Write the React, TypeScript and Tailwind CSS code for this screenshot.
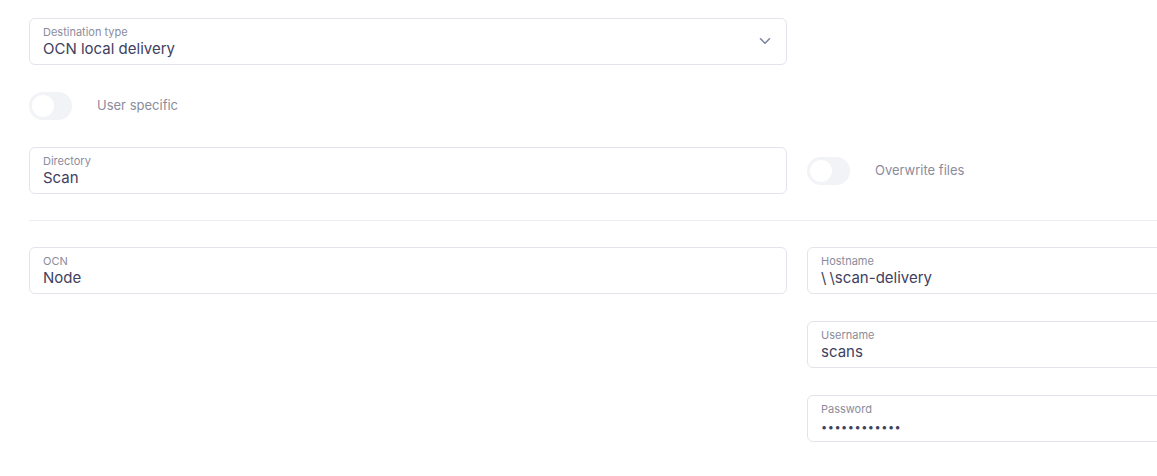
import React from 'react';

const font = { fontFamily: 'Inter, "Noto Sans", sans-serif' };

const Field: React.FC<{ label: string; value: React.ReactNode; chevron?: boolean }> = ({ label, value, chevron }) => (
  <div className="relative h-[47px] rounded-md border border-[#e3e3ee] bg-white pl-[13px] pr-4 pt-[6px]">
    <div className="text-[11px] leading-[14px] text-[#8b8c9c]">{label}</div>
    <div className="text-[15px] leading-[19px] text-[#3e4160]">{value}</div>
    {chevron && (
      <svg className="absolute right-[15px] top-[18px]" width="12" height="8" viewBox="0 0 12 8" fill="none">
        <path d="M1.5 1.8 6 6.2l4.5-4.4" stroke="#7f849f" strokeWidth="1.6" strokeLinecap="round" strokeLinejoin="round" />
      </svg>
    )}
  </div>
);

const Toggle: React.FC<{ label: string }> = ({ label }) => (
  <div className="flex items-center gap-[25px]">
    <div className="flex h-[28px] w-[43px] items-center rounded-full bg-[#f1f3f6] px-[3px]">
      <div className="h-[22px] w-[22px] rounded-full bg-white" />
    </div>
    <span className="text-[13px] text-[#8b8c9c]">{label}</span>
  </div>
);

export default function App() {
  return (
    <div className="h-[476px] w-full overflow-hidden bg-white" style={font}>
      <div className="w-[1600px] pl-[29px] pt-[18px]">
        <div className="grid grid-cols-[758px_758px] gap-x-5">
          <Field label="Destination type" value="OCN local delivery" chevron />
          <div />
        </div>

        <div className="mt-[27px]">
          <Toggle label="User specific" />
        </div>

        <div className="mt-[27px] grid grid-cols-[758px_758px] items-center gap-x-5">
          <Field label="Directory" value="Scan" />
          <Toggle label="Overwrite files" />
        </div>

        <div className="mt-[26px] h-px bg-[#ededf3]" />

        <div className="mt-[26px] grid grid-cols-[758px_758px] gap-x-5">
          <Field label="OCN" value="Node" />
          <div className="flex flex-col gap-[27px]">
            <Field
              label="Hostname"
              value={
                <>
                  <span className="mr-[3px]">\</span>\scan-delivery
                </>
              }
            />
            <Field label="Username" value="scans" />
            <Field
              label="Password"
              value={<span className="text-[11px] tracking-[0.5px]">••••••••••••</span>}
            />
          </div>
        </div>
      </div>
    </div>
  );
}
